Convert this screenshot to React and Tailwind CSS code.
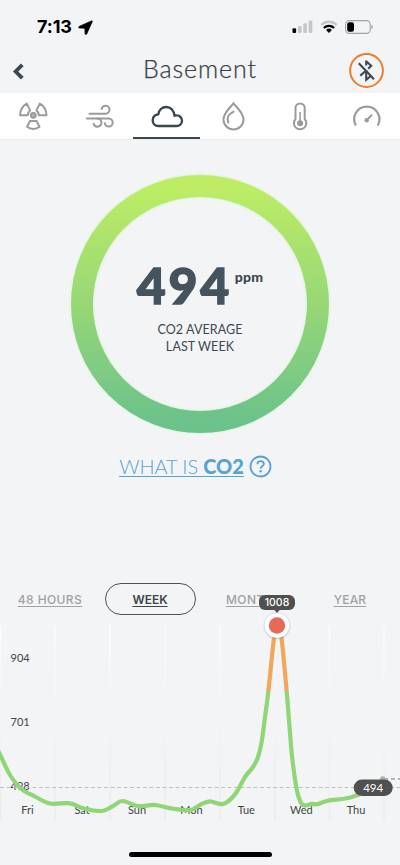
import React from 'react';

// =============================================
// DATA
// =============================================
const CHART_TOP = 620;

const POINTS = [
  [-6, 744], [0, 754.5], [10, 775], [21.5, 789], [35, 796.5], [50, 803.5], [70, 803.3], [84, 808.5],
  [102, 811], [113, 806], [122.5, 801], [138, 806], [155, 805], [173, 808.7], [191, 810],
  [200, 804.8], [210, 801.3], [223, 804], [235, 794.3], [245, 777], [253, 767], [258, 757],
  [261.8, 741], [265, 717], [268.3, 691.7], [274, 638], [277.5, 622], [281.5, 638], [286.7, 691.7], [289, 720],
  [292, 756], [296.5, 788], [300.5, 802], [304.5, 805.5], [311.7, 803.9], [317, 804.2],
  [328, 800.8], [346.7, 798.3], [362, 793.5],
];

const DAYS = [
  { label: 'Fri', x: 27.5 },
  { label: 'Sat', x: 82 },
  { label: 'Sun', x: 137 },
  { label: 'Mon', x: 191.5 },
  { label: 'Tue', x: 246.3 },
  { label: 'Wed', x: 301.3 },
  { label: 'Thu', x: 356 },
];

const LEVELS = [
  { label: '904', y: 662 },
  { label: '701', y: 726 },
  { label: '498', y: 790 },
];

const GRID = [0.5, 55, 110, 165, 220, 275, 329.5, 384];

function smoothPath(pts) {
  let d = `M${pts[0][0]} ${pts[0][1] - CHART_TOP}`;
  for (let i = 0; i < pts.length - 1; i++) {
    const p0 = pts[i - 1] || pts[i];
    const p1 = pts[i];
    const p2 = pts[i + 1];
    const p3 = pts[i + 2] || p2;
    const c1 = [p1[0] + (p2[0] - p0[0]) / 6, p1[1] + (p2[1] - p0[1]) / 6 - CHART_TOP];
    const c2 = [p2[0] - (p3[0] - p1[0]) / 6, p2[1] - (p3[1] - p1[1]) / 6 - CHART_TOP];
    d += `C${c1[0]} ${c1[1]} ${c2[0]} ${c2[1]} ${p2[0]} ${p2[1] - CHART_TOP}`;
  }
  return d;
}

// =============================================
// STATUS BAR
// =============================================
function StatusBar() {
  return (
    <div className="h-[46px] flex items-start justify-between pl-[37px] pr-[27px] pt-[17px] text-black">
      <div className="flex items-center h-5">
        <span className="w-[38px] font-[Inter] font-bold text-[18px] leading-5 tracking-[-0.1px] whitespace-nowrap">7:13</span>
        <svg width="15" height="15" viewBox="0 0 15 15" className="ml-[3px]">
          <path
            d="M13.6 .9 1.2 6.4c-.8.4-.7 1.4.2 1.5l5.5.3.2 5.5c.1.9 1.2 1 1.6.2L14.3 1.5c.2-.5-.2-.8-.7-.6Z"
            stroke="#000"
            strokeWidth="0.8"
            strokeLinejoin="round"
          />
        </svg>
      </div>
      <div className="flex items-center h-[19px]">
        <svg width="21" height="14" viewBox="0 0 21 14">
          <rect x="0.5" y="8.3" width="3.6" height="4.7" rx="1" />
          <g fill="#c5c6c8">
            <rect x="6" y="6" width="3.6" height="7" rx="1" />
            <rect x="11.3" y="3.2" width="3.6" height="9.8" rx="1" />
            <rect x="16.7" y="0.5" width="3.6" height="12.5" rx="1" />
          </g>
        </svg>
        <svg width="18" height="14" viewBox="0 0 18 14" className="ml-[7px]" fill="none" strokeWidth="2.3">
          <path d="M1.3 4.9a11 11 0 0 1 15.4 0" stroke="#c5c6c8" />
          <path d="M3.9 8a7.3 7.3 0 0 1 10.2 0" stroke="#000" />
          <path d="m9 13-2.9-3a4.2 4.2 0 0 1 5.8 0Z" fill="#000" />
        </svg>
        <svg width="28" height="14" viewBox="0 0 28 14" className="ml-[7px]">
          <rect x="0.6" y="0.6" width="24.6" height="12.8" rx="3.8" fill="none" stroke="#a2a3a6" strokeWidth="1.1" />
          <rect x="2.2" y="2.2" width="6.8" height="9.6" rx="2" />
          <path d="M26.4 4.7c1.8.7 1.8 3.9 0 4.6Z" fill="#a2a3a6" />
        </svg>
      </div>
    </div>
  );
}

// =============================================
// HEADER
// =============================================
function Header() {
  return (
    <header className="h-[47px] flex items-center justify-between pl-3 pr-4">
      <button className="w-[35px]">
        <svg width="12" height="17" viewBox="0 0 12 17" className="mt-[3px]" fill="none" stroke="#3f484f" strokeWidth="3.8">
          <path d="M10.3 1.8 3.6 8.5l6.7 6.7" />
        </svg>
      </button>
      <h1 className="ml-[4px] mb-[3px] font-[Lato] font-light text-[25px] leading-[30px] tracking-[0.9px] text-[#3a4147] [-webkit-text-stroke:0.25px_#3a4147] whitespace-nowrap">Basement</h1>
      <button className="w-[35px] h-[35px] mt-[2px]">
        <svg width="35" height="35" viewBox="0 0 35 35" fill="none">
          <circle cx="17.5" cy="17.5" r="16.4" stroke="#ee7d2c" strokeWidth="2" />
          <g stroke="#3f484f" strokeWidth="2.1">
            <path d="M9.8 10.3 25 26.2" />
            <path d="M17.2 7.5v5M17.2 8.2l5 4.5-3 3" />
            <path d="M17.2 17v9.8l4.6-3.8M11.3 22.6l5.6-4.8" />
          </g>
        </svg>
      </button>
    </header>
  );
}

// =============================================
// SENSOR TABS
// =============================================
function RadonIcon() {
  return (
    <svg width="30" height="30" viewBox="0 0 30 30" fill="none" stroke="#9b9b9b" strokeWidth="2" strokeLinejoin="round">
      <circle cx="15.3" cy="14.3" r="2.4" fill="#b5b5b5" />
      <path d="M2.1 14.2C2.3 9 4.3 5 8.8 2.6l3.4 6.8c-1.5 1.1-2.3 2.6-2.4 4.8Z" />
      <path d="M28.5 14.2C28.3 9 26.3 5 21.8 2.6l-3.4 6.8c1.5 1.1 2.3 2.6 2.4 4.8Z" />
      <path d="M12.1 20h6.4l3 5.8c-3.5 2.8-8.9 2.8-12.4 0Z" />
    </svg>
  );
}

function WindIcon() {
  return (
    <svg width="30" height="30" viewBox="0 0 30 30" fill="none" stroke="#9b9b9b" strokeWidth="2" strokeLinecap="round">
      <path d="M4.5 12.7H20.7a4 4 0 1 0-4.1-4.6" />
      <path d="M1.8 17.6H23.8a4 4 0 1 1-4.1 4.6" />
      <path d="M12.3 17.6a4 4 0 1 1-3.7 5.3" />
    </svg>
  );
}

function CloudIcon() {
  return (
    <svg width="34" height="30" viewBox="0 0 34 30" fill="none" stroke="#3c464d" strokeWidth="2.4" strokeLinejoin="round">
      <path d="M8.3 25H26.5a5.3 5.3 0 0 0 .4-10.6 4.8 4.8 0 0 0-2.4.3C23.8 9.6 20.6 6 16.3 6c-4.4 0-7.4 3.2-8 7.3-3.4.6-5.6 2.9-5.6 6 0 3.2 2.3 5.7 5.6 5.7Z" />
    </svg>
  );
}

function DropIcon() {
  return (
    <svg width="30" height="30" viewBox="0 0 30 30" fill="none" stroke="#9b9b9b" strokeWidth="2">
      <path d="M15.5 2.3C12 7 5.5 11.7 5.5 18.5a10 10 0 0 0 20 0C25.5 11.7 19 7 15.5 2.3Z" />
      <path d="M15.6 10.6c-5.4 2.7-7.2 6.8-5.2 11" strokeLinecap="round" />
    </svg>
  );
}

function ThermometerIcon() {
  return (
    <svg width="30" height="30" viewBox="0 0 30 30" fill="none" stroke="#9b9b9b" strokeWidth="2">
      <path d="M10.5 18V7a4.6 4.6 0 0 1 9.2 0v11a6.2 6.2 0 1 1-9.2 0Z" />
      <circle cx="15.1" cy="22.3" r="3" fill="#9b9b9b" stroke="none" />
      <path d="M15.1 21V11" strokeWidth="1.6" />
    </svg>
  );
}

function GaugeIcon() {
  return (
    <svg width="30" height="30" viewBox="0 0 30 30" fill="none" stroke="#9b9b9b" strokeWidth="2.2" strokeLinecap="round">
      <path d="M3.5 23.7A12.6 12.6 0 1 1 26.1 23.7" />
      <path d="m15 18.8 4.6-4.6" strokeWidth="2" />
      <circle cx="14.7" cy="19.2" r="2.2" fill="#9b9b9b" stroke="none" />
    </svg>
  );
}

const TABS = [RadonIcon, WindIcon, CloudIcon, DropIcon, ThermometerIcon, GaugeIcon];

function SensorTabs() {
  return (
    <nav className="h-[47px] grid grid-cols-6 bg-white border-b border-[#e8eaeb]">
      {TABS.map((Icon, i) => (
        <button
          key={i}
          className={`flex justify-center pt-[8px] ${i === 2 ? 'border-b-2 border-[#3c464d]' : ''}`}
        >
          <Icon />
        </button>
      ))}
    </nav>
  );
}

// =============================================
// AVERAGE RING
// =============================================
function AverageRing() {
  return (
    <section className="grid place-items-center pt-[30px]">
      <svg width="268" height="268" viewBox="0 0 268 268" className="col-start-1 row-start-1">
        <defs>
          <linearGradient id="ring" x1="0" y1="0" x2="0" y2="1">
            <stop offset="0" stopColor="#beed65" />
            <stop offset="0.5" stopColor="#97d776" />
            <stop offset="1" stopColor="#6bc28b" />
          </linearGradient>
        </defs>
        <circle cx="134" cy="134" r="118" fill="none" stroke="#e6f4e6" strokeWidth="25" />
        <circle cx="134" cy="134" r="118" fill="none" stroke="url(#ring)" strokeWidth="22" />
      </svg>
      <div className="col-start-1 row-start-1 h-[268px] flex flex-col items-center pt-[85px] font-[Lato] text-[#3f484f]">
        <div className="flex items-start h-[59px] whitespace-nowrap">
          <span className="font-black text-[50px] leading-[60px] tracking-[2.7px] text-[#46535c] [-webkit-text-stroke:1.4px_#46535c]">494</span>
          <span className="font-black text-[14px] leading-[18px] tracking-[0.2px] ml-[3px] mt-[13px]">ppm</span>
        </div>
        <p className="mt-[7px] text-center text-[12.5px] leading-[17px] tracking-[0.1px] whitespace-nowrap">
          CO2 AVERAGE<br />LAST WEEK
        </p>
      </div>
    </section>
  );
}

function HelpLink() {
  return (
    <a className="flex items-center justify-center h-[28px] mt-[14px] pr-[9px] font-[Lato] text-[20px] leading-6 text-[#5ba3cf] whitespace-nowrap">
      <span className="border-b border-[#5ba3cf] leading-[20px] tracking-[-0.1px]">
        <span className="font-light">WHAT IS </span>
        <span className="font-black">CO2</span>
      </span>
      <svg width="23" height="23" viewBox="0 0 23 23" className="ml-[5px]" fill="none" stroke="#5ba3cf" strokeWidth="1.8">
        <circle cx="11.5" cy="11.5" r="10" />
        <path d="M8.3 9.3c.1-2 1.4-3.2 3.3-3.2 1.8 0 3.2 1.1 3.2 2.8 0 2.3-3.2 2.5-3.2 4.8" />
        <circle cx="11.6" cy="16.3" r="1.2" fill="#5ba3cf" stroke="none" />
      </svg>
    </a>
  );
}

// =============================================
// RANGE PICKER
// =============================================
function RangePicker() {
  const base = 'font-[Inter] text-[12px] font-medium leading-[14px] underline underline-offset-2 text-center whitespace-nowrap';
  return (
    <div className="h-[33px] mt-[102px] grid grid-cols-4 items-center">
      <button className={`${base} pt-[2px] text-[#a0a2a4] tracking-[0.4px]`}>48 HOURS</button>
      <button className={`${base} h-[32px] w-[91px] pt-[2px] justify-self-center rounded-full border border-[#4c5256] text-[#3c464d] font-semibold`}>WEEK</button>
      <button className={`${base} pt-[2px] text-[#a0a2a4] tracking-[0.4px]`}>MONTH</button>
      <button className={`${base} pt-[2px] text-[#a0a2a4] tracking-[0.2px]`}>YEAR</button>
    </div>
  );
}

// =============================================
// CHART
// =============================================
function Chart() {
  return (
    <svg width="400" height="204" viewBox="0 0 400 204" className="mt-[5px] overflow-visible">
      <defs>
        <linearGradient id="grid" gradientUnits="userSpaceOnUse" x1="0" y1="6" x2="0" y2="200">
          <stop offset="0" stopColor="#fbfcfc" />
          <stop offset="0.4" stopColor="#f4f5f7" />
          <stop offset="1" stopColor="#e8eaec" />
        </linearGradient>
        <linearGradient id="line" gradientUnits="userSpaceOnUse" x1="0" y1="0" x2="0" y2="200">
          <stop offset="0.355" stopColor="#f1a659" />
          <stop offset="0.358" stopColor="#90d576" />
        </linearGradient>
        <filter id="shadow" x="-30%" y="-30%" width="160%" height="160%">
          <feDropShadow dx="0" dy="0.5" stdDeviation="1" floodColor="#52636b" floodOpacity="0.5" />
        </filter>
      </defs>

      {GRID.map((x) => (
        <rect key={x} x={x - 0.7} y="6" width="1.4" height="193" fill="url(#grid)" />
      ))}

      <g fontFamily="Lato, sans-serif" fontSize="11" fill="#3f454a">
        {LEVELS.map((l) => (
          <text key={l.label} x="10.5" y={l.y - CHART_TOP}>{l.label}</text>
        ))}
        {DAYS.map((d) => (
          <text key={d.label} x={d.x} y="194" textAnchor="middle">{d.label}</text>
        ))}
      </g>

      <path d="M0 167.5H400" stroke="#bcc0c2" strokeWidth="1" strokeDasharray="4 2.5" />
      <path d="M384 158.8H400" stroke="#aaadaf" strokeWidth="1.8" strokeDasharray="4 3" />
      <circle cx="382.7" cy="159" r="2.8" fill="#a9b4a9" />

      <path d={smoothPath(POINTS)} fill="none" stroke="url(#line)" strokeWidth="4.2" />

      {/* Peak marker */}
      <circle cx="277" cy="5.5" r="12.2" fill="#fff" filter="url(#shadow)" />
      <circle cx="277" cy="5.5" r="8.2" fill="#e66a57" />
      <path d="m274 -10.5 3 3.5 3-3.5Z" fill="#505050" />
      <rect x="259" y="-25" width="36" height="15" rx="6" fill="#505050" />
      <text x="277" y="-13.7" fontFamily="Inter, sans-serif" fontSize="10.5" fontWeight="500" fill="#fff" textAnchor="middle">1008</text>

      {/* Current reading */}
      <rect x="353.7" y="159.5" width="39" height="16.5" rx="8.2" fill="#505050" />
      <text x="373.2" y="171.7" fontFamily="Lato, sans-serif" fontSize="11.5" fill="#fff" textAnchor="middle">494</text>
    </svg>
  );
}

export default function App() {
  return (
    <div className="w-[400px] h-[865px] flex flex-col bg-[#f2f4f6] overflow-hidden">
      <StatusBar />
      <Header />
      <SensorTabs />
      <AverageRing />
      <HelpLink />
      <RangePicker />
      <Chart />
      <div className="mt-auto mb-[8px] mx-auto w-[143px] h-[5px] rounded-full bg-black" />
    </div>
  );
}
